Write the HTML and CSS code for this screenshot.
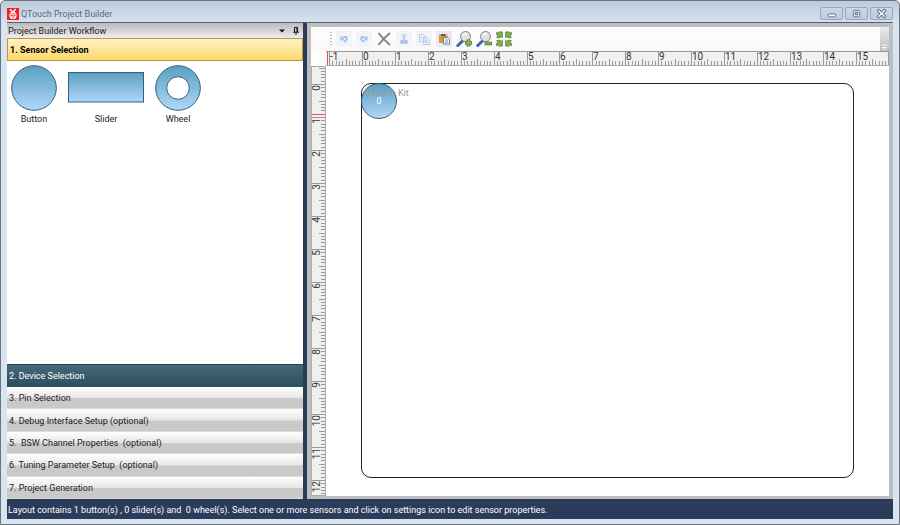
FILE: index.html
```html
<!DOCTYPE html>
<html lang="en">
<head>
<meta charset="utf-8">
<title>QTouch Project Builder</title>
<link rel="stylesheet" href="styles.css">
</head>
<body>
<div class="window">
  <header class="titlebar">
    <svg class="logo" viewBox="0 0 12 12" aria-hidden="true">
      <rect width="12" height="12" fill="#ee2027"/>
      <path d="M3 1.2 5.6 4M8.6 1 6.3 4" stroke="#fff" stroke-width="1.3"/>
      <ellipse cx="6" cy="7.4" rx="3.6" ry="3.7" fill="#fff"/>
      <path d="M3.2 5.8h5.6M6 5.8v5" stroke="#ee2027" stroke-width=".6"/>
      <circle cx="4.4" cy="7.6" r=".9" fill="#ee2027"/><circle cx="7.6" cy="7.6" r=".9" fill="#ee2027"/>
      <circle cx="6" cy="9.6" r=".6" fill="#ee2027"/>
    </svg>
    <h1 class="title">QTouch Project Builder</h1>
    <div class="window-buttons">
      <button class="window-button" aria-label="Minimize"><svg viewBox="0 0 22 12"><rect x="7.5" y="6.5" width="8" height="3" rx="1" fill="#fff" stroke="#5f6c80"/></svg></button>
      <button class="window-button" aria-label="Maximize"><svg viewBox="0 0 22 12"><rect x="7.5" y="2.5" width="7" height="7" rx="1" fill="#fff" stroke="#5f6c80"/><rect x="9.5" y="4.5" width="3" height="3" fill="#a9bacb" stroke="#5f6c80"/></svg></button>
      <button class="window-button" aria-label="Close"><svg viewBox="0 0 22 12"><path d="m8 3 6 6M14 3 8 9" stroke="#5f6c80" stroke-width="3.6" stroke-linecap="square"/><path d="m8 3 6 6M14 3 8 9" stroke="#fff" stroke-width="1.6" stroke-linecap="square"/></svg></button>
    </div>
  </header>
  <div class="workspace">
    <aside class="workflow">
      <div class="panel-header">
        <h2 class="panel-title">Project Builder Workflow</h2>
        <button class="panel-button" aria-label="Panel menu"><svg viewBox="0 0 8 8"><path d="M1 2.500h6L4 5.500z" fill="#111"/></svg></button>
        <button class="panel-button" aria-label="Pin panel"><svg viewBox="0 0 8 8"><path d="M2.500 5V.5h3V5M1 5.200h6M4 5v3" fill="none" stroke="#111"/><path d="M5 .5V5" stroke="#111"/></svg></button>
      </div>
      <button class="step step-current">1. Sensor Selection</button>
      <div class="palette">
        <button class="tool">
          <svg class="shape" viewBox="0 0 46 46">
            <defs><linearGradient id="sensor-fill" x2="0" y2="1"><stop stop-color="#5a9fc0"/><stop offset="1" stop-color="#b0d7fa"/></linearGradient></defs>
            <circle cx="23" cy="23" r="22.300" fill="url(#sensor-fill)" stroke="#365f7a"/>
          </svg>Button</button>
        <button class="tool">
          <svg class="shape shape-wide" viewBox="0 0 76 46"><rect x=".5" y="7.500" width="75" height="29.500" fill="url(#sensor-fill)" stroke="#365f7a"/></svg>Slider</button>
        <button class="tool">
          <svg class="shape" viewBox="0 0 46 46"><circle cx="23" cy="23" r="22.300" fill="url(#sensor-fill)" stroke="#365f7a"/><circle cx="23" cy="23" r="11.300" fill="#fff" stroke="#365f7a"/></svg>Wheel</button>
      </div>
      <button class="step step-next">2. Device Selection</button>
      <div class="steps">
        <button class="step">3. Pin Selection</button>
        <button class="step">4. Debug Interface Setup (optional)</button>
        <button class="step">5.&nbsp; BSW Channel Properties&nbsp; (optional)</button>
        <button class="step">6. Tuning Parameter Setup&nbsp; (optional)</button>
        <button class="step">7. Project Generation</button>
      </div>
    </aside>
    <main class="editor">
      <div class="toolbar" role="toolbar" aria-label="Layout tools">
        <svg class="grip" viewBox="0 0 2 16" aria-hidden="true"><path d="M1 1v15" stroke="#aaa" stroke-width="1.500" stroke-dasharray="1 2"/></svg>
        <button class="action muted" aria-label="Undo"><svg viewBox="0 0 16 16"><path d="M6 7.500c3-3 6-1 4.600 1.200-.5 1-1.500 1.600-2.300 2.600" fill="none" stroke="#9dbaec" stroke-width="1.700"/><path d="M4.300 4.500v5h5z" fill="#adc5ef"/></svg></button>
        <button class="action muted" aria-label="Redo"><svg viewBox="0 0 16 16"><path d="M10 7.500c-3-3-6-1-4.600 1.200.5 1 1.500 1.600 2.300 2.600" fill="none" stroke="#9dbaec" stroke-width="1.700"/><path d="M11.700 4.500v5h-5z" fill="#adc5ef"/></svg></button>
        <button class="action" aria-label="Delete"><svg viewBox="0 0 16 16"><path d="M2.500 2c3 4 7 8 11.500 12M14 2C9.500 5.500 6 9 2.500 14" fill="none" stroke="#858585" stroke-width="1.900"/></svg></button>
        <button class="action muted" aria-label="Cut"><svg viewBox="0 0 16 16"><path d="m6.200 3 3 7M9.800 3l-3 7" stroke="#bcc8d8" stroke-width="1.300"/><g fill="none" stroke="#9dbaec" stroke-width="1.400"><circle cx="6" cy="11" r="1.300"/><circle cx="10" cy="11" r="1.300"/></g></svg></button>
        <button class="action muted" aria-label="Copy"><svg viewBox="0 0 16 16"><g fill="#eaf1fc" stroke="#b9cdf1"><path d="M3.500 3.500h4l2 2v5h-6zM7.500 6.500h4l2 2v5h-6z"/><path d="M5 6.500h2M9 9.500h3M9 11.500h3"/></g></svg></button>
        <button class="action action-ready" aria-label="Paste"><svg viewBox="0 0 16 16"><rect x="3" y="3.500" width="8.500" height="8.500" rx="1" fill="#d9992e"/><path d="M5 3h4.500v2H5z" fill="#5d5d62"/><path d="M7.500 6.500h4l2 2v4.500h-6z" fill="#f5f7fc" stroke="#58698c" stroke-width=".8"/><path d="M9 9h3M9 11h3" stroke="#7895c8"/></svg></button>
        <button class="action" aria-label="Zoom in"><svg viewBox="0 0 16 16"><path d="M6.500 10 1.800 14.500" stroke="#3565bc" stroke-width="3" stroke-linecap="round"/><circle cx="9.500" cy="5.500" r="5" fill="#dfe2e5" stroke="#858585"/><path d="M7 4.500c.7-1.500 2-2 4-1.500" fill="none" stroke="#fff" stroke-width="1.500"/><path d="M12.500 8.500v7M9 12h7" stroke="#47762c" stroke-width="3.600"/><path d="M12.500 9v6M9.500 12h6" stroke="#87b64e" stroke-width="2.200"/></svg></button>
        <button class="action" aria-label="Zoom out"><svg viewBox="0 0 16 16"><path d="M6.500 10 1.800 14.500" stroke="#3565bc" stroke-width="3" stroke-linecap="round"/><circle cx="9.500" cy="5.500" r="5" fill="#dfe2e5" stroke="#858585"/><path d="M7 4.500c.7-1.500 2-2 4-1.500" fill="none" stroke="#fff" stroke-width="1.500"/><path d="M8.500 12.500H16" stroke="#47762c" stroke-width="3.600"/><path d="M9 12.500h6.500" stroke="#87b64e" stroke-width="2"/></svg></button>
        <button class="action" aria-label="Fit to window"><svg viewBox="0 0 16 16"><defs><path id="corner" d="M.6 1.200 2 2.200 3.200.8 6.400 1v5.600L5.200 5.800 3.800 6.800.6 6.500 2 5 .6 3.800z" fill="#80ad4c" stroke="#47762c" stroke-width=".7"/></defs><use href="#corner"/><use href="#corner" transform="matrix(-1 0 0 1 16 0)"/><use href="#corner" transform="matrix(1 0 0 -1 0 16)"/><use href="#corner" transform="rotate(180 8 8)"/></svg></button>
        <button class="overflow" aria-label="Toolbar options"><svg viewBox="0 0 8 8"><path d="M2 2h5M2.500 4.500h4L4.500 7z" stroke="#fff" fill="#aaa"/></svg></button>
      </div>
      <div class="sheet">
        <div class="corner"></div>
        <svg class="ruler ruler-x" data-axis="x" aria-hidden="true"></svg>
        <svg class="ruler ruler-y" data-axis="y" aria-hidden="true"></svg>
        <div class="canvas">
          <div class="board">
            <button class="sensor">0</button>
            <span class="board-name">QTouch Kit</span>
          </div>
        </div>
      </div>
    </main>
  </div>
  <footer class="status">Layout contains 1 button(s) , 0 slider(s) and&nbsp; 0 wheel(s). Select one or more sensors and click on settings icon to edit sensor properties.</footer>
</div>
<script src="ruler.js"></script>
</body>
</html>
```
FILE: styles.css
```css
* { box-sizing: border-box; }

body {
  margin: 0;
  font: 9px/12px Roboto, "Open Sans", sans-serif;
  color: #222;
}

button {
  margin: 0;
  padding: 0;
  border: 0;
  background: none;
  font: inherit;
  color: inherit;
}

svg { display: block; }
h1, h2 { margin: 0; font: inherit; }

.window {
  display: flex;
  flex-direction: column;
  height: 100vh;
  padding: 0 6px 5px;
  border: 1px solid #6b737c;
  border-radius: 5px 5px 0 0;
  background: linear-gradient(#bccbda, #d7e5f3 24px);
}

.titlebar {
  display: flex;
  flex: none;
  align-items: center;
  gap: 2px;
  height: 21px;
  padding-top: 4px;
}

.logo { width: 12px; height: 12px; }
.title { flex: 1; color: #5c6a78; }
.window-buttons { display: flex; gap: 2px; }

.window-button {
  width: 23px;
  height: 13px;
  border: 1px solid #98a8bc;
  border-radius: 2px;
  background: linear-gradient(#cbd8e6, #bccddf);
}

.window-button svg { width: 100%; height: 100%; }

.workspace {
  display: flex;
  flex: 1;
  min-height: 0;
  border-top: 1px solid #566170;
  background: #2b3b59;
}

.workflow {
  display: flex;
  flex-direction: column;
  width: 34%;
  max-width: 296px;
  background: #fff;
}

.panel-header {
  display: flex;
  flex: none;
  align-items: center;
  gap: 6px;
  height: 15px;
  padding: 0 3px 0 1px;
  background: linear-gradient(#bbb, #ededed);
}

.panel-title { flex: 1; }
.panel-button svg { width: 8px; height: 8px; }

.step {
  flex: none;
  padding: 1px 2px 0;
  border-bottom: 1px solid #ddd;
  background: linear-gradient(#fff, #e7e7e7 50%, #cacaca 54%, #c9c9c9);
  text-align: left;
}

.step-current {
  height: 23px;
  padding: 0 2px;
  border: 1px solid #b99b46;
  background: linear-gradient(#fff0c8, #ffd969);
  color: #000;
  font-weight: 700;
}

.step-next {
  height: 23px;
  padding: 0 2px;
  border-top: 1px solid #294350;
  border-bottom: 0;
  background: linear-gradient(#44697a, #2c4f5e);
  color: #fff;
}

.steps { display: grid; grid-auto-rows: 1fr; height: 112px; }

.palette {
  display: flex;
  flex: 1;
  align-items: flex-start;
  gap: 11px;
  padding: 4px;
}

.tool { display: flex; flex-direction: column; align-items: center; gap: 2px; }
.shape { width: 46px; height: 46px; }
.shape-wide { width: 76px; }

.editor {
  display: flex;
  flex: 1;
  flex-direction: column;
  min-width: 0;
  margin-left: 4px;
  padding: 4px 4px 3px;
  background: #bebebe;
}

.toolbar {
  display: flex;
  flex: none;
  align-items: center;
  gap: 4px;
  height: 24px;
  padding-left: 19px;
  background: linear-gradient(#fff, #fbf6fa);
}

.grip { width: 2px; height: 16px; }
.action { padding: 0; background: transparent; }
.action svg { width: 16px; height: 16px; }
.muted { background: #f3f4f7; }
.action-ready { background: #e7eaf0; }

.overflow {
  display: flex;
  align-items: flex-end;
  align-self: stretch;
  width: 9px;
  margin-left: auto;
  background: linear-gradient(#ececec, #bcbcbc);
}

.overflow svg { width: 8px; height: 8px; }

.sheet {
  display: grid;
  flex: 1;
  grid-template: 15px 1fr / 15px 1fr;
  min-height: 0;
  background: #fff;
}

.ruler { width: 100%; height: 100%; overflow: hidden; background: #f0f0f0; }
.ruler-x { border-top: 1px solid #999; border-bottom: 1px solid #aaa; }
.ruler-y { border: 1px solid #aaa; }
.ruler text { font-size: 10px; fill: #333; }
.tick { stroke: #999; shape-rendering: crispEdges; }
.marker { stroke: #f05050; shape-rendering: crispEdges; }

.canvas { display: flex; padding: 17px 35px 18px; }

.board {
  position: relative;
  flex: 1;
  border: 1px solid #222;
  border-radius: 10px;
}

.board-name {
  position: absolute;
  top: 3px;
  left: 3px;
  color: #999;
  pointer-events: none;
}

.sensor {
  position: absolute;
  top: -1px;
  left: -1px;
  width: 36px;
  height: 36px;
  border: 1px solid #365f7a;
  border-radius: 50%;
  background: linear-gradient(#5a9fc0, #b0d7fa);
  color: #fff;
}

.status {
  flex: none;
  height: 20px;
  padding: 5px 1px;
  overflow: hidden;
  background: #2b3b59;
  color: #fff;
  white-space: nowrap;
}
```
FILE: ruler.js
```js
const NS = "http://www.w3.org/2000/svg";
const UNIT = 33;

function add(svg, name, attributes, text) {
  const node = document.createElementNS(NS, name);
  for (const key in attributes) node.setAttribute(key, attributes[key]);
  if (text !== undefined) node.textContent = text;
  svg.appendChild(node);
}

function drawRuler(svg) {
  const horizontal = svg.dataset.axis === "x";
  const length = horizontal ? svg.clientWidth : svg.clientHeight;
  const origin = horizontal ? 36 : 17;
  const depth = 13;
  const scale = horizontal ? UNIT - 0.1 : UNIT;

  function line(at, size, name) {
    add(svg, "line", horizontal
      ? { x1: at, x2: at, y1: depth - size, y2: depth, class: name }
      : { y1: at, y2: at, x1: depth - size, x2: depth, class: name });
  }

  for (let i = -10; origin + i * scale / 10 < length; i++) {
    const at = Math.round(origin + i * scale / 10);
    if (at < 0) continue;
    line(at, i % 10 === 0 ? depth : i % 5 === 0 ? 6 : 4, "tick");
    if (i % 10 === 0 && at + 12 < length) {
      add(svg, "text", horizontal
        ? { x: at + 1, y: 8 }
        : { x: 0, y: 0, transform: `translate(8 ${at + 1}) rotate(-90)`, "text-anchor": "end" }, i / 10);
    }
  }
  line(horizontal ? 1 : 47, depth, "marker");
}

function drawAll() {
  document.querySelectorAll(".ruler").forEach(svg => {
    svg.replaceChildren();
    drawRuler(svg);
  });
}

drawAll();
window.addEventListener("resize", drawAll);
```
